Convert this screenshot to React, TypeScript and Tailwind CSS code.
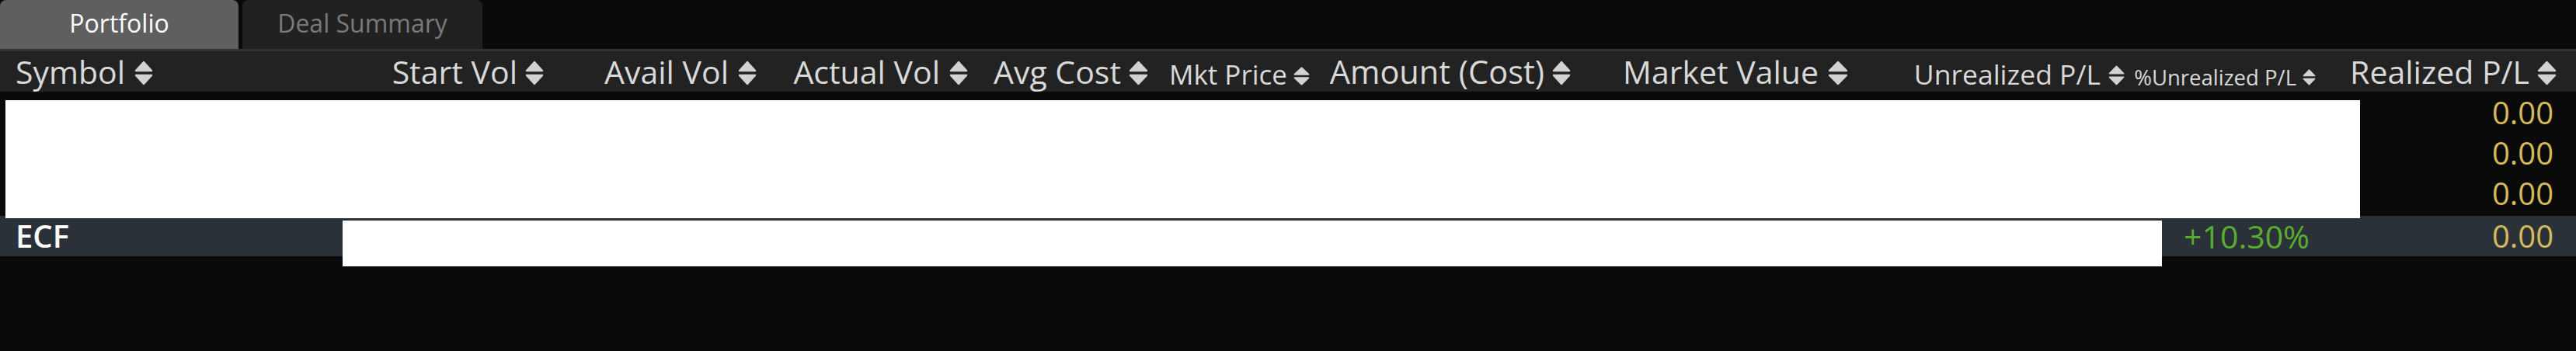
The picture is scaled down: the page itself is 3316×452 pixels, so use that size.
import React from "react";

type Col = { label: string; w: string; size: string; iw: number; ih: number; gap: string };

const SortIcon = ({ w, h }: { w: number; h: number }) => (
  <svg width={w} height={h} viewBox="0 0 24 32" preserveAspectRatio="none" className="shrink-0">
    <polygon points="12,2 22,13 2,13" fill="#d2d2d2" stroke="#d2d2d2" strokeWidth="2.5" strokeLinejoin="round" />
    <polygon points="2,19 22,19 12,30" fill="#d2d2d2" stroke="#d2d2d2" strokeWidth="2.5" strokeLinejoin="round" />
  </svg>
);

const cols: Col[] = [
  { label: "Symbol", w: "w-[440px] justify-start pl-[20px]", size: "text-[41px]", iw: 24, ih: 32, gap: "gap-[12px]" },
  { label: "Start Vol", w: "w-[266px] justify-end pr-[6px]", size: "text-[41px]", iw: 24, ih: 32, gap: "gap-[10px]" },
  { label: "Avail Vol", w: "w-[274px] justify-end pr-[6px]", size: "text-[41px]", iw: 24, ih: 32, gap: "gap-[12px]" },
  { label: "Actual Vol", w: "w-[272px] justify-end pr-[6px]", size: "text-[41px]", iw: 24, ih: 32, gap: "gap-[12px]" },
  { label: "Avg Cost", w: "w-[232px] justify-end pr-[6px]", size: "text-[41px]", iw: 25, ih: 32, gap: "gap-[10px]" },
  { label: "Mkt Price", w: "w-[208px] justify-end pr-[6px]", size: "text-[35px]", iw: 21, ih: 24, gap: "gap-[8px]" },
  { label: "Amount (Cost)", w: "w-[336px] justify-end pr-[6px]", size: "text-[41.5px]", iw: 24, ih: 32, gap: "gap-[10px]" },
  { label: "Market Value", w: "w-[357px] justify-end pr-[6px]", size: "text-[41px]", iw: 26, ih: 32, gap: "gap-[12px]" },
  { label: "Unrealized P/L", w: "w-[356px] justify-end pr-[6px]", size: "text-[35.5px]", iw: 21, ih: 26, gap: "gap-[10px]" },
  { label: "%Unrealized P/L", w: "w-[246px] justify-end pr-[6px]", size: "text-[27.5px]", iw: 17, ih: 21, gap: "gap-[8px]" },
  { label: "Realized P/L", w: "flex-1 justify-end pr-[25px]", size: "text-[41px]", iw: 25, ih: 32, gap: "gap-[10px]" },
];

const Row = ({ ecf }: { ecf?: boolean }) => (
  <div
    className={
      ecf
        ? "flex h-[52px] items-center bg-[#2b3139] text-[40px] leading-none"
        : "flex h-[52px] items-center pb-[6px] text-[40px] leading-none"
    }
  >
    <div className="w-[440px] pl-[20px] font-semibold text-white">{ecf ? "ECF" : ""}</div>
    <div className="w-[2301px]" />
    <div className="flex w-[246px] justify-end pr-[14px] text-[41px] text-[#5bad2f]">{ecf ? "+10.30%" : ""}</div>
    <div className="flex flex-1 justify-end pr-[29px] text-[#d6b95a]">0.00</div>
  </div>
);

export default function App() {
  return (
    <div
      className="h-[452px] w-full bg-[#0a0a0a] text-[#d9d9d9]"
      style={{ fontFamily: '"Open Sans", "Noto Sans", sans-serif' }}
    >
      <div className="flex h-[63px] gap-[5px]">
        <div className="flex w-[307px] items-center justify-center rounded-t-[8px] bg-[#5f5f5f] pb-[3px] text-[32px] leading-none text-white">
          Portfolio
        </div>
        <div className="flex w-[309px] items-center justify-center rounded-t-[8px] bg-[#212121] pb-[3px] text-[32px] leading-none text-[#7a7a7a]">
          Deal Summary
        </div>
      </div>
      <div className="flex h-[55px] border-t-[3px] border-[#333333] bg-[#222222]">
        {cols.map((c) => (
          <div key={c.label} className={`flex h-full items-end pb-[5px] ${c.w} ${c.gap}`}>
            <span className={`${c.size} leading-none whitespace-nowrap`}>{c.label}</span>
            <span className="mb-[3px] flex">
              <SortIcon w={c.iw} h={c.ih} />
            </span>
          </div>
        ))}
      </div>
      <div className="relative pt-[4px]">
        <Row />
        <Row />
        <Row />
        <Row ecf />
        <div className="absolute left-[7px] top-[11px] h-[152px] w-[3031px] bg-white" />
        <div className="absolute left-[441px] top-[166px] h-[59px] w-[2342px] bg-white" />
      </div>
    </div>
  );
}
